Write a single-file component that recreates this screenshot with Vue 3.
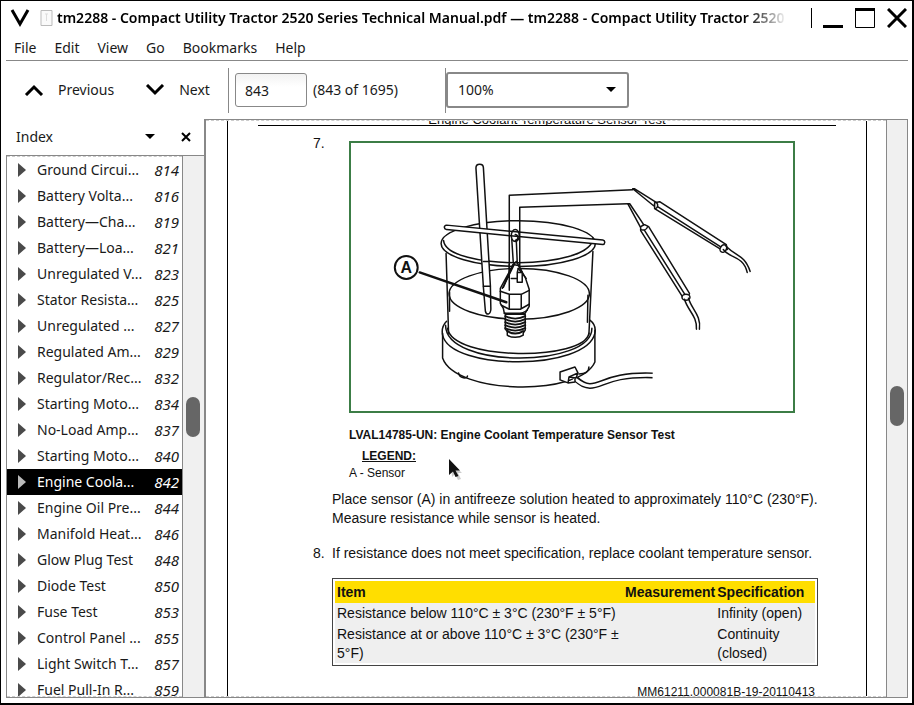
<script setup>
import { ref } from 'vue'

const menus = ['File', 'Edit', 'View', 'Go', 'Bookmarks', 'Help']

const entries = [
  { label: 'Ground Circui...', page: 814 },
  { label: 'Battery Volta...', page: 816 },
  { label: 'Battery—Cha...', page: 819 },
  { label: 'Battery—Loa...', page: 821 },
  { label: 'Unregulated V...', page: 823 },
  { label: 'Stator Resista...', page: 825 },
  { label: 'Unregulated ...', page: 827 },
  { label: 'Regulated Am...', page: 829 },
  { label: 'Regulator/Rec...', page: 832 },
  { label: 'Starting Moto...', page: 834 },
  { label: 'No-Load Amp...', page: 837 },
  { label: 'Starting Moto...', page: 840 },
  { label: 'Engine Coola...', page: 842 },
  { label: 'Engine Oil Pre...', page: 844 },
  { label: 'Manifold Heat...', page: 846 },
  { label: 'Glow Plug Test', page: 848 },
  { label: 'Diode Test', page: 850 },
  { label: 'Fuse Test', page: 853 },
  { label: 'Control Panel ...', page: 855 },
  { label: 'Light Switch T...', page: 857 },
  { label: 'Fuel Pull-In R...', page: 859 }
]

const selected = ref(842)
const pageNumber = ref('843')
const zoom = ref('100%')
</script>

<template>
  <div class="window">
    <header class="titlebar">
      <button class="bare" aria-label="Window menu">
        <svg width="20" height="20" viewBox="0 0 20 20"><path d="M2 2 L10 16 L18 2" fill="none" stroke="#000" stroke-width="3" /></svg>
      </button>
      <svg class="doc-icon" width="13" height="16" viewBox="0 0 13 16">
        <path d="M1 .5H12V15.5H1Z" fill="#fafafa" stroke="#bbb" />
        <path d="M5 4H8M6.500 4V11" fill="none" stroke="#ddd" />
      </svg>
      <h1 class="title">tm2288 - Compact Utility Tractor 2520 Series Technical Manual.pdf — tm2288 - Compact Utility Tractor 2520 Series</h1>
      <div class="controls">
        <button class="bare" aria-label="Minimize">
          <svg width="20" height="20" viewBox="0 0 20 20"><path d="M0 17H20V20H0Z" /></svg>
        </button>
        <button class="bare" aria-label="Maximize">
          <svg width="20" height="20" viewBox="0 0 20 20"><path d="M.5 1V19.500H19.500V1" fill="none" stroke="#000" /><path d="M0 0H20V3H0Z" /></svg>
        </button>
        <button class="bare" aria-label="Close">
          <svg width="20" height="20" viewBox="0 0 20 20"><path d="M1 1L19 19M19 1L1 19" stroke="#000" stroke-width="3" /></svg>
        </button>
      </div>
    </header>

    <nav class="menubar">
      <button v-for="m in menus" :key="m" class="bare">{{ m }}</button>
    </nav>

    <div class="toolbar">
      <div class="nav-group">
        <button class="bare nav-button">
          <svg width="20" height="12" viewBox="0 0 20 12"><path d="M2 11L10 3L18 11" fill="none" stroke="#000" stroke-width="3" /></svg>
          Previous
        </button>
        <button class="bare nav-button">
          <svg width="20" height="12" viewBox="0 0 20 12"><path d="M2 1L10 9L18 1" fill="none" stroke="#000" stroke-width="3" /></svg>
          Next
        </button>
      </div>
      <div class="page-group">
        <input id="page-number" v-model="pageNumber" class="page-input" type="text" aria-label="Page number" />
        <label for="page-number">(843 of 1695)</label>
      </div>
      <div class="zoom-group">
        <select v-model="zoom" class="zoom-select" aria-label="Zoom">
          <option>50%</option>
          <option>100%</option>
          <option>200%</option>
        </select>
        <svg class="zoom-arrow" width="10" height="6" viewBox="0 0 10 6"><path d="M0 0H10L5 5Z" /></svg>
      </div>
    </div>

    <div class="body">
      <aside class="sidebar">
        <div class="side-head">
          <h2>Index</h2>
          <button class="bare" aria-label="Choose pane">
            <svg width="10" height="6" viewBox="0 0 10 6"><path d="M0 0H10L5 5Z" /></svg>
          </button>
          <button class="bare close-pane" aria-label="Close pane">
            <svg width="10" height="10" viewBox="0 0 10 10"><path d="M1 1L9 9M9 1L1 9" stroke="#000" stroke-width="2" /></svg>
          </button>
        </div>
        <div class="side-main">
          <ul class="index">
            <li v-for="e in entries" :key="e.page">
              <button class="bare row" :class="{ active: selected === e.page }" @click="selected = e.page">
                <svg width="8" height="14" viewBox="0 0 8 14"><path d="M0 0L8 7L0 14Z" fill="currentColor" /></svg>
                <span class="row-label">{{ e.label }}</span>
                <span class="row-page">{{ e.page }}</span>
              </button>
            </li>
          </ul>
          <div class="scrollbar side-scroll"><span class="before"></span><span class="thumb"></span></div>
        </div>
      </aside>

      <main class="viewer">
        <div class="canvas">
          <article class="page">
            <h2 class="page-title">Engine Coolant Temperature Sensor Test</h2>
            <div class="step">
              <span>7.</span>
              <div>
                <figure class="figure">
                  <svg class="drawing" viewBox="350 142 444 269" fill="none" stroke="#111" stroke-width="1.500" stroke-linecap="round" stroke-linejoin="round">
                    <!-- beaker rim and glass -->
                    <ellipse cx="518" cy="243" rx="77.500" ry="23" />
                    <path d="M443 240C446 270 590 270 593 238" />
                    <path d="M445.500 253L448 333M593 251L589 334" />
                    <!-- liquid -->
                    <ellipse cx="519" cy="293.500" rx="70.500" ry="25.500" />
                    <path d="M449 292V311M588 295L587.500 322" />
                    <!-- heater base -->
                    <path d="M447 328C451 361 585 361 589 333" />
                    <path d="M445 325C445 369 592 368 592 328" />
                    <path d="M446 321C442 325 441 330 442 335C450 371 587 371 595 333C596 328 594 323 590 320" />
                    <path d="M442 333V358C455 395 580 397 595 362V330" />
                    <path d="M458 373C459 379 467 379 467 376M579 374C584 374 589 373 589 367" />
                    <!-- plug and cord -->
                    <path d="M576 379C580 383 584 386 590 386C603 386 609 374 653 375.500" stroke="#111" stroke-width="6" stroke-linecap="butt" />
                    <path d="M575 379C580 383 584 386 590 386C603 386 609 374 655 375.500" stroke="#fff" stroke-width="3" />
                    <path d="M560 372L575 367L578 373L569 377L568 383L560 380ZM569 377L576 378L578 373M568 383L575 382V378" fill="#fff" />
                    <!-- thermometer -->
                    <path d="M475.500 167C475.500 162 483 162 483 167L490 285L490.500 309C490 315 486 315 485 311L483 287Z" fill="#fff" />
                    <path d="M483 261H489M483 286H490" />
                    <!-- support rod -->
                    <path d="M446 224.500L603 239.500C606 240 605 244 603 244L446 229C443 228 443 225 446 224.500Z" fill="#fff" />
                    <!-- test leads -->
                    <path d="M509 290V194.500L633 189M519.500 270V206.500L628 203" />
                    <!-- hanging hook -->
                    <ellipse cx="515" cy="235" rx="4" ry="6" />
                    <path d="M515 234C519 235 518 240 515 240M511.500 239L513 262M516 239L517 262M512 265L516 261L519 266" />
                    <!-- sensor -->
                    <path d="M513 264L500 288V303L503 308L504 313H525L529 306V289L525 277L518 265L513 264L503 287" fill="#fff" />
                    <path d="M509 264V290M514 264L502 288M518 268L526 278M511 278H517M500 291L509 294L521 294L529 290M509 294V308M521 294V308M501 305L509 309H520L529 304M504 313C510 315 520 315 527 310" />
                    <path d="M517 272H522V282H517ZM518 268L517 272M520 268L522 272" fill="#fff" />
                    <path d="M505 314H525V330L523 333V335C519 338 511 338 507 335V331L505 329Z" fill="#fff" />
                    <path d="M505 316C511 319 519 319 525 316M505 319C511 322 519 322 525 319M505 322C511 325 519 325 525 322M505 325C511 328 519 328 525 325M505 328C511 331 519 331 525 328M507 331C512 334 518 334 523 331" stroke-width="2" />
                    <!-- upper probe -->
                    <path d="M633 188L635 188L657 202L654 205Z" fill="#fff" />
                    <path d="M655 202L660 201L727 244L728 249L722 249L655 208Z" fill="#fff" />
                    <path d="M657 202C659 204 658 207 656 208M658 206L721 246" />
                    <ellipse cx="724" cy="248" rx="3" ry="4" transform="rotate(30 724 248)" fill="#fff" />
                    <path d="M724 249C730 258 744 255 748 272M727 246C737 256 745 254 751 271" />
                    <!-- lower probe -->
                    <path d="M628 203L630 203L644 224L641 227Z" fill="#fff" />
                    <path d="M641 226L645 224L649 226L690 293L689 297L684 298L641 230Z" fill="#fff" />
                    <path d="M641 229C644 230 647 229 648 226M645 230L686 295" />
                    <ellipse cx="686.500" cy="297" rx="4" ry="3" fill="#fff" />
                    <path d="M685 299C688 310 698 316 697 329M689 298C692 309 702 315 700 329" />
                    <!-- callout -->
                    <path d="M419 272L506 302" stroke-width="2.500" />
                    <circle cx="405.500" cy="267" r="11.500" fill="#fff" stroke-width="2" />
                    <text x="405.500" y="273" class="callout">A</text>
                  </svg>
                  <figcaption>LVAL14785-UN: Engine Coolant Temperature Sensor Test</figcaption>
                  <h3 class="legend">LEGEND:</h3>
                  <p>A - Sensor</p>
                </figure>
                <p class="para">Place sensor (A) in antifreeze solution heated to approximately 110°C (230°F). Measure resistance while sensor is heated.</p>
              </div>
            </div>
            <div class="step">
              <span>8.</span>
              <div>
                <p>If resistance does not meet specification, replace coolant temperature sensor.</p>
                <table class="spec">
                  <thead>
                    <tr><th class="col-item">Item</th><th class="col-measure">Measurement</th><th>Specification</th></tr>
                  </thead>
                  <tbody>
                    <tr><td>Resistance below 110°C ± 3°C (230°F ± 5°F)</td><td></td><td>Infinity (open)</td></tr>
                    <tr><td>Resistance at or above 110°C ± 3°C (230°F ± 5°F)</td><td></td><td>Continuity (closed)</td></tr>
                  </tbody>
                </table>
              </div>
            </div>
            <p class="doc-code">MM61211,000081B-19-20110413</p>
          </article>
        </div>
        <div class="scrollbar main-scroll"><span class="before"></span><span class="thumb"></span></div>
      </main>
    </div>

    <svg class="pointer" width="14" height="22" viewBox="0 0 14 22">
      <path d="M2 3L13 14H9L12 20L9 21L6 15L3 18Z" fill="#ccc" />
      <path d="M0 0L11 11.500H6.500L9.500 17L6.500 18L4 12.500L0 16Z" fill="#111" />
    </svg>
  </div>
</template>

<style>
body {
  background: #fff;
}
</style>

<style scoped>
* {
  box-sizing: border-box;
}

.window {
  position: relative;
  display: flex;
  flex-direction: column;
  height: 100vh;
  padding: 0 4px 5px 5px;
  border: 1px solid #000;
  border-right-width: 2px;
  border-bottom-width: 2px;
  overflow: hidden;
  background: #fff;
  color: #1a1a1a;
  font: 14px/20px 'Noto Sans', sans-serif;
}

h1, h2, h3, p, ul, figure {
  margin: 0;
  padding: 0;
  font-size: inherit;
  font-weight: normal;
}

svg {
  display: block;
  flex: none;
}

.bare {
  margin: 0;
  padding: 0;
  border: 0;
  background: none;
  color: inherit;
  font: inherit;
}

.titlebar {
  display: flex;
  align-items: center;
  height: 34px;
  padding: 0 1px 0 4px;
}

.doc-icon {
  margin: 0 4px 0 10px;
}

.title {
  flex: 1;
  min-width: 0;
  overflow: hidden;
  white-space: nowrap;
  color: #000;
  font-weight: 600;
  mask-image: linear-gradient(to right, #000 calc(100% - 48px), transparent calc(100% - 8px));
}

.controls {
  display: flex;
  gap: 12px;
  margin-left: 16px;
  padding-left: 11px;
  border-left: 1px solid #000;
}

.menubar {
  display: flex;
  align-items: center;
  gap: 18px;
  height: 26px;
  padding: 0 8px;
  border-bottom: 1px solid #888;
}

.toolbar {
  display: flex;
  align-items: center;
  height: 58px;
  padding-left: 18px;
}

.nav-group {
  display: flex;
  gap: 31px;
  width: 204px;
}

.nav-button {
  display: flex;
  align-items: center;
  gap: 14px;
}

.page-group {
  display: flex;
  align-items: center;
  gap: 6px;
  width: 217px;
  height: 45px;
  padding-left: 6px;
  border-left: 1px solid #888;
}

.page-input {
  width: 72px;
  height: 34px;
  padding: 0 9px;
  border: 1px solid #888;
  border-radius: 3px;
  background: linear-gradient(#f2f2f2, #fff 40%);
  color: inherit;
  font: inherit;
}

.zoom-group {
  position: relative;
  display: flex;
  align-items: center;
  height: 45px;
  border-left: 1px solid #888;
}

.zoom-select {
  width: 183px;
  height: 36px;
  padding: 0 10px;
  border: 2px solid #888;
  border-radius: 3px;
  appearance: none;
  background: #fff;
  color: inherit;
  font: inherit;
}

.zoom-arrow {
  position: absolute;
  right: 13px;
  pointer-events: none;
}

.body {
  display: flex;
  flex: 1;
  min-height: 0;
}

.sidebar {
  display: flex;
  flex-direction: column;
  flex: none;
  width: 198px;
}

.side-head {
  display: flex;
  align-items: center;
  height: 36px;
  padding: 0 13px 0 10px;
}

.side-head h2 {
  flex: 1;
}

.close-pane {
  margin-left: 26px;
}

.side-main {
  display: flex;
  flex: 1;
  min-height: 0;
  border: 1px solid #888;
  border-right: 0;
}

.index {
  flex: 1;
  min-width: 0;
  overflow: hidden;
  border-top: 1px dashed #ccc;
  border-bottom: 1px dashed #ccc;
  list-style: none;
}

.row {
  display: flex;
  align-items: center;
  width: 100%;
  height: 26px;
  padding: 0 3px 0 11px;
  color: #4a4a4a;
  text-align: left;
  white-space: nowrap;
}

.row-label {
  flex: 1;
  margin-left: 11px;
  color: #1a1a1a;
}

.row-page {
  color: #1a1a1a;
  font-size: 15px;
  font-style: italic;
}

.row.active {
  background: #000;
  color: #bbb;
}

.row.active span {
  color: #fff;
}

.scrollbar {
  display: flex;
  flex-direction: column;
  align-items: center;
  flex: none;
  border-left: 1px solid #888;
  background: #f0f0f0;
}

.scrollbar::after {
  content: '';
  flex: 260 0 0;
}

.side-scroll {
  width: 22px;
  padding-right: 1px;
}

.side-scroll .before {
  flex: 241 0 0;
}

.main-scroll {
  width: 21px;
}

.main-scroll .before {
  flex: 255 0 0;
}

.thumb {
  width: 14px;
  height: 40px;
  border-radius: 7px;
  background: #666;
}

.viewer {
  display: flex;
  flex: 1;
  min-width: 0;
  border: 1px solid #888;
  border-left-width: 2px;
}

.canvas {
  flex: 1;
  min-width: 0;
  overflow: hidden;
  padding: 0 19px 0 21px;
  border-top: 1px dashed #ccc;
  border-bottom: 1px dashed #ccc;
}

.page {
  padding: 0 30px;
  border: solid #000;
  border-width: 0 1px;
  color: #111;
  font: 14px/19px 'Liberation Sans', Arial, sans-serif;
}

.page-title {
  display: flex;
  align-items: flex-end;
  justify-content: center;
  height: 5px;
  overflow: hidden;
  border-bottom: 1px solid #000;
  font-size: 13px;
  line-height: 10px;
}

.step {
  display: grid;
  grid-template-columns: 19px 1fr;
  padding: 8px 18px 0 55px;
}

.figure {
  padding: 7px 23px 0 17px;
  font-size: 12px;
  line-height: 17px;
}

.drawing {
  width: 100%;
  border: 2px solid #3c7d46;
}

.callout {
  fill: #111;
  stroke: none;
  font: bold 16px 'Liberation Sans', Arial, sans-serif;
  text-anchor: middle;
}

.figure figcaption {
  padding-top: 14px;
  font-weight: bold;
}

.legend {
  padding: 4px 0 0 13px;
  font-weight: bold;
  text-decoration: underline;
}

.para {
  margin-right: -12px;
  padding: 8px 0;
}

.spec {
  width: 100%;
  margin-top: 15px;
  padding: 2px;
  border: 1px solid #444;
  border-spacing: 0;
}

.spec th,
.spec td {
  padding: 1px 0 1px 2px;
  text-align: left;
  vertical-align: top;
}

.spec th {
  padding-top: 2px;
  background: #ffde00;
}

.spec td {
  background: #efefef;
}

.spec tr:last-child td {
  padding-bottom: 0;
}

.col-item {
  width: 288px;
}

.col-measure {
  width: 92px;
}

.doc-code {
  padding: 17px 21px 0 0;
  font-size: 12px;
  text-align: right;
}

.pointer {
  position: absolute;
  top: 458px;
  left: 448px;
  pointer-events: none;
}
</style>
